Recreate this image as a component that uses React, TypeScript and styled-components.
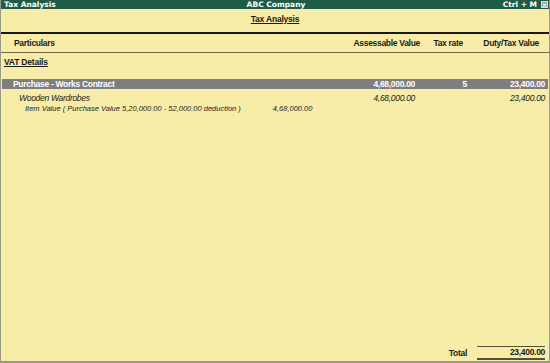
import * as React from 'react';
import styled, {createGlobalStyle} from 'styled-components';

const GlobalStyle = createGlobalStyle`
  html, body {
    margin: 0;
    padding: 0;
    background: #f8eda8;
  }
  #root {
    height: 100vh;
  }
`;

const Window = styled.div`
  box-sizing: border-box;
  height: 100%;
  display: flex;
  flex-direction: column;
  background: #f8eda8;
  border-left: 1px solid #9a9a88;
  border-right: 1px solid #9a9a88;
  border-bottom: 2px solid #9a9a88;
  font-family: 'Liberation Sans', Arial, sans-serif;
  color: #1a1a1a;
`;

const TitleBar = styled.div`
  height: 9px;
  display: grid;
  grid-template-columns: 1fr auto 1fr;
  align-items: center;
  background: #1f5c48;
  color: #fff;
  font-family: 'DejaVu Sans', Verdana, sans-serif;
  font-weight: bold;
  font-size: 7.5px;
  line-height: 9px;
  padding: 0 1px 0 3px;
`;

const TitleRight = styled.div`
  display: flex;
  justify-content: flex-end;
  align-items: center;
  gap: 4px;
`;

const CloseBox = styled.span`
  box-sizing: border-box;
  width: 7px;
  height: 7px;
  border: 1px solid #e0e0e0;
  background: #9aa89f;
  display: flex;
  align-items: center;
  justify-content: center;
  font-size: 6px;
  line-height: 5px;
  font-family: 'DejaVu Sans', sans-serif;
`;

const ReportTitle = styled.div`
  box-sizing: border-box;
  text-align: center;
  font-weight: bold;
  font-size: 8.5px;
  letter-spacing: -0.2px;
  text-decoration: underline;
  padding-top: 5px;
  height: 23px;
`;

const Row = styled.div<{$bar?: boolean; $bold?: boolean; $italic?: boolean}>`
  display: grid;
  grid-template-columns: 1fr 80px 52px 78px;
  align-items: center;
  padding: 0 4px 0 0;
  font-size: 8.5px;
  letter-spacing: -0.3px;
  font-weight: ${p => (p.$bold ? 'bold' : 'normal')};
  font-style: ${p => (p.$italic ? 'italic' : 'normal')};
  background: ${p => (p.$bar ? '#7e7e7e' : 'transparent')};
  color: ${p => (p.$bar ? '#fff' : '#1a1a1a')};
`;

const HeaderRow = styled(Row)`
  box-sizing: border-box;
  grid-template-columns: 1fr 80px 43px 76px;
  border-top: 2px solid #1a1a1a;
  border-bottom: 1px solid #6f6845;
  height: 21px;
  padding-right: 10px;
`;

const Cell = styled.div<{$align?: 'left' | 'right' | 'center'; $indent?: number}>`
  text-align: ${p => p.$align || 'right'};
  padding-left: ${p => p.$indent || 0}px;
  white-space: nowrap;
`;

const SectionTitle = styled.div`
  box-sizing: border-box;
  font-size: 8.5px;
  letter-spacing: -0.2px;
  font-weight: bold;
  text-decoration: underline;
  padding: 4px 0 0 3px;
  height: 26px;
`;

const BarRow = styled(Row)`
  height: 10px;
  margin: 0 1px;
  padding-right: 3px;
`;

const ItemRow = styled(Row)`
  height: 10px;
  margin-top: 4px;
`;

const DetailLine = styled.div`
  display: flex;
  font-size: 7.5px;
  font-style: italic;
  height: 10px;
  align-items: center;
  padding-left: 24px;
`;

const DetailAmount = styled.span`
  margin-left: 32px;
`;

const Spacer = styled.div`
  flex: 1;
`;

const TotalRow = styled.div`
  display: flex;
  justify-content: flex-end;
  align-items: center;
  gap: 10px;
  padding: 0 4px 1px 0;
  font-size: 8.5px;
  letter-spacing: -0.3px;
  font-weight: bold;
`;

const TotalAmount = styled.div`
  width: 68px;
  height: 9px;
  line-height: 9px;
  text-align: right;
  border-top: 1px solid #55502f;
  border-bottom: 2px solid #55502f;
  padding: 1px 0;
`;

export default function App() {
  return (
    <>
      <GlobalStyle />
      <Window>
        <TitleBar>
          <span>Tax Analysis</span>
          <span>ABC Company</span>
          <TitleRight>
            <span>Ctrl + M</span>
            <CloseBox>×</CloseBox>
          </TitleRight>
        </TitleBar>
        <ReportTitle>Tax Analysis</ReportTitle>
        <HeaderRow $bold>
          <Cell $align="left" $indent={13}>Particulars</Cell>
          <Cell>Assessable Value</Cell>
          <Cell>Tax rate</Cell>
          <Cell>Duty/Tax Value</Cell>
        </HeaderRow>
        <SectionTitle>VAT Details</SectionTitle>
        <BarRow $bar $bold>
          <Cell $align="left" $indent={11}>Purchase - Works Contract</Cell>
          <Cell>4,68,000.00</Cell>
          <Cell>5</Cell>
          <Cell>23,400.00</Cell>
        </BarRow>
        <ItemRow $italic>
          <Cell $align="left" $indent={18}>Wooden Wardrobes</Cell>
          <Cell>4,68,000.00</Cell>
          <Cell />
          <Cell>23,400.00</Cell>
        </ItemRow>
        <DetailLine>
          <span>Item Value ( Purchase Value 5,20,000.00 - 52,000.00 deduction )</span>
          <DetailAmount>4,68,000.00</DetailAmount>
        </DetailLine>
        <Spacer />
        <TotalRow>
          <span>Total</span>
          <TotalAmount>23,400.00</TotalAmount>
        </TotalRow>
      </Window>
    </>
  );
}
